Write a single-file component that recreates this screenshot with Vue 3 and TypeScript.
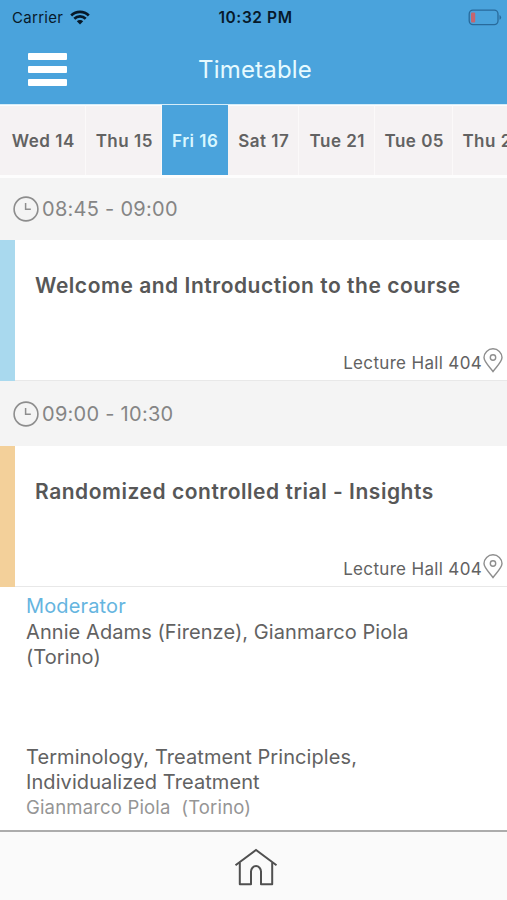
<script setup lang="ts">
interface Day { label: string; width: number }
interface Talk { title: string[]; speaker: string }
interface Session {
  time: string
  title: string
  room: string
  tone: 'sky' | 'sand'
  moderators?: string[]
  talks?: Talk[]
}

const days: Day[] = [
  { label: 'Wed 14', width: 86 },
  { label: 'Thu 15', width: 76 },
  { label: 'Fri 16', width: 66 },
  { label: 'Sat 17', width: 71 },
  { label: 'Tue 21', width: 76 },
  { label: 'Tue 05', width: 78 },
  { label: 'Thu 27', width: 78 },
]
const activeDay = 2

const sessions: Session[] = [
  { time: '08:45 - 09:00', title: 'Welcome and Introduction to the course', room: 'Lecture Hall 404', tone: 'sky' },
  {
    time: '09:00 - 10:30',
    title: 'Randomized controlled trial - Insights',
    room: 'Lecture Hall 404',
    tone: 'sand',
    moderators: ['Annie Adams (Firenze), Gianmarco Piola', '(Torino)'],
    talks: [
      { title: ['Terminology, Treatment Principles,', 'Individualized Treatment'], speaker: 'Gianmarco Piola\u00a0 (Torino)' },
    ],
  },
]
</script>

<template>
  <div class="screen">
    <header class="header">
      <div class="status">
        <div class="carrier">
          <span>Carrier</span>
          <svg class="wifi" viewBox="0 0 20 15" width="20" height="15">
            <path d="M1.2 5.5a12.6 12.6 0 0 1 17.6 0M4.3 8.8a8.1 8.1 0 0 1 11.4 0" fill="none" stroke="#07192a" stroke-width="2.7" />
            <path d="M10 14.5 6.8 11.3a4.6 4.6 0 0 1 6.4 0z" fill="#07192a" />
          </svg>
        </div>
        <span class="clock">10:32 PM</span>
        <svg class="battery" viewBox="0 0 34 17" width="34" height="17">
          <rect x="1.2" y="1.2" width="28.8" height="14.4" rx="3.8" fill="none" stroke="#286a9b" stroke-width="1.3" />
          <rect x="3" y="3.5" width="4.2" height="10" rx="1" fill="#c4656e" />
          <path d="M31.5 6q1.6 .8 1.6 2.4t-1.6 2.4z" fill="#286a9b" />
        </svg>
      </div>
      <div class="toolbar">
        <button class="menu" aria-label="Menu"><i /><i /><i /></button>
        <h1>Timetable</h1>
      </div>
    </header>

    <nav class="days">
      <button
        v-for="(day, i) in days"
        :key="i"
        class="day"
        :class="{ active: i === activeDay }"
        :style="{ width: day.width + 'px' }"
      ><span>{{ day.label }}</span></button>
    </nav>

    <main class="agenda">
      <section v-for="session in sessions" :key="session.time">
        <div class="slot">
          <svg viewBox="0 0 26 26" width="26" height="26" fill="none" stroke="#8d8d8d">
            <circle cx="13" cy="13" r="11.9" stroke-width="1.6" />
            <path d="M12.6 7v6.2h5.2" stroke-width="1.5" />
          </svg>
          <span>{{ session.time }}</span>
        </div>
        <article class="card" :class="session.tone">
          <h2>{{ session.title }}</h2>
          <div class="room">
            <span>{{ session.room }}</span>
            <svg viewBox="0 0 20 25" width="20" height="25" fill="none" stroke="#8e8e8e" stroke-width="1.4">
              <path d="M10 23.5C7.2 19.5 1 14 1 9.6a9 8.8 0 0 1 18 0C19 14 12.8 19.5 10 23.5z" />
              <circle cx="10" cy="9.5" r="2.7" />
            </svg>
          </div>
        </article>
        <div v-if="session.moderators" class="details">
          <h3>Moderator</h3>
          <p v-for="line in session.moderators" :key="line"><span>{{ line }}</span></p>
          <div v-for="talk in session.talks" :key="talk.speaker" class="talk">
            <p v-for="line in talk.title" :key="line"><span>{{ line }}</span></p>
            <p class="speaker"><span>{{ talk.speaker }}</span></p>
          </div>
        </div>
      </section>
    </main>

    <footer class="footer">
      <svg viewBox="0 0 44 38" width="44" height="38" fill="none" stroke="#505050" stroke-width="2">
        <path d="M1.5 17.3 22 2l20.5 15.3" />
        <path d="M5.800 14.500v21.800h11.200V23.600a5 5.500 0 0 1 10 0v12.700h11.200V14.500" stroke-linejoin="round" />
      </svg>
    </footer>
  </div>
</template>

<style>
body {
  margin: 0;
  background: #fff;
}
</style>

<style scoped>
.screen {
  width: 507px;
  height: 900px;
  display: flex;
  flex-direction: column;
  overflow: hidden;
  background: #fff;
  color: #626262;
  font-family: Inter, "Liberation Sans", sans-serif;
}
h1, h2, h3, p { margin: 0; }
button { border: 0; padding: 0; font: inherit; }
.header {
  flex: none;
  height: 104px;
  background: #4aa3dc;
}
.status {
  display: grid;
  grid-template-columns: 1fr auto 1fr;
  align-items: center;
  height: 34px;
  padding: 0 5px 0 9px;
  color: #07192a;
  font-size: 15px;
}
.carrier {
  display: flex;
  align-items: center;
  gap: 7px;
  padding-left: 3px;
  letter-spacing: 0.3px;
}
.clock {
  font-size: 15.5px;
  font-weight: 600;
  letter-spacing: 0.6px;
}
.battery { justify-self: end; }
.toolbar {
  display: grid;
  grid-template-columns: 39px 1fr 39px;
  align-items: center;
  height: 71px;
  padding: 0 25px 0 28px;
}
.menu {
  display: grid;
  gap: 6px;
  background: none;
}
.menu i {
  height: 7px;
  border-radius: 1px;
  background: #fff;
}
h1 {
  text-align: center;
  color: #e6faff;
  font-size: 24px;
  font-weight: 400;
  line-height: 71px;
  letter-spacing: 0.2px;
}
.days {
  flex: none;
  display: flex;
  box-sizing: border-box;
  height: 74px;
  border-top: 1px solid #d5ecf8;
  border-bottom: 3px solid #fdfdfd;
  overflow: hidden;
}
.day {
  flex: none;
  box-sizing: border-box;
  padding-left: 1.5px;
  border-top: 1px solid #fbfdfe;
  border-right: 1px solid #fbf9f9;
  background: #f5f2f3;
  color: #626262;
  font-size: 17px;
  font-weight: 600;
  letter-spacing: 0.5px;
  white-space: nowrap;
}
.day.active {
  border-color: #4aa3dc;
  background: #4aa3dc;
  color: #d9f7ff;
}
.slot {
  display: flex;
  align-items: center;
  gap: 3px;
  height: 65px;
  box-sizing: border-box;
  padding: 1px 0 0 13px;
  background: #f4f4f4;
  color: #858585;
  font-size: 20px;
  letter-spacing: 0.27px;
}
section:first-child .slot {
  height: 62px;
  padding-top: 0;
}
.card {
  box-sizing: border-box;
  display: flex;
  flex-direction: column;
  justify-content: space-between;
  height: 141px;
  padding: 32px 4px 8px 20px;
  border-left: 15px solid;
  background: linear-gradient(#e8e8e8, #e8e8e8) bottom / 100% 1px no-repeat #fff;
}
.sky { border-left-color: #a9d9ee; }
.sand { border-left-color: #f3d09a; }
h2 {
  color: #575757;
  font-size: 21px;
  font-weight: 600;
  line-height: 28px;
  letter-spacing: 0.53px;
  white-space: nowrap;
}
.room {
  display: flex;
  justify-content: flex-end;
  align-items: center;
  gap: 1px;
  font-size: 17px;
  letter-spacing: 0.33px;
}
.room span { padding-top: 4px; }
.details { padding: 6px 26px 0; }
h3 {
  color: #65b5df;
  font-size: 20px;
  font-weight: 400;
  line-height: 26px;
  letter-spacing: 0.15px;
  margin-bottom: 1px;
}
.details p {
  font-size: 20px;
  line-height: 25px;
  letter-spacing: 0.08px;
  white-space: nowrap;
}
.talk { padding-top: 75px; }
.details .speaker {
  color: #959595;
  font-size: 18.5px;
  letter-spacing: 0.17px;
}
.agenda { flex: 1; min-height: 0; }
.footer {
  flex: none;
  display: flex;
  justify-content: center;
  align-items: center;
  box-sizing: border-box;
  height: 70px;
  padding: 2px 0 0 5px;
  border-top: 2px solid #acacac;
  background: #fafafa;
}
</style>
